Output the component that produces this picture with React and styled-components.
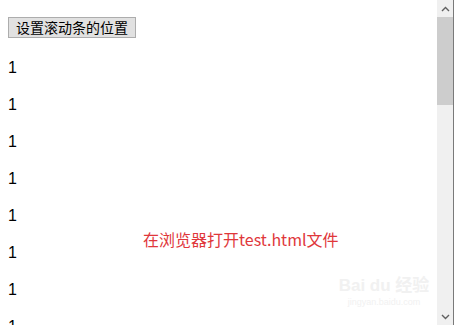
import React from "react";
import styled, { createGlobalStyle } from "styled-components";

const GlobalStyle = createGlobalStyle`
  html, body {
    margin: 0;
    padding: 0;
    background: #ffffff;
    overflow: hidden;
  }
`;

const Window = styled.div`
  position: relative;
  width: 456px;
  height: 325px;
  display: flex;
  overflow: hidden;
  background: #ffffff;
`;

const Content = styled.div`
  flex: 1;
  padding: 17px 0 0 8px;
  overflow: hidden;
  font-family: "Liberation Sans", Arial, sans-serif;
`;

const Button = styled.button`
  display: block;
  height: 21px;
  padding: 0 7px;
  background: #e1e1e1;
  border: 1px solid #adadad;
  border-radius: 0;
  font-family: "Noto Sans CJK SC", "Liberation Sans", sans-serif;
  font-size: 14px;
  line-height: 19px;
  color: #000000;
`;

const Line = styled.p`
  margin: 16px 0 0;
  font-size: 16px;
  line-height: 21px;
  color: #000000;
  &:first-of-type {
    margin-top: 19px;
  }
`;

const Scrollbar = styled.div`
  width: 16px;
  display: flex;
  flex-direction: column;
  background: #f0f0f0;
  margin-right: 2px;
  border-right: 1px solid #7a7a7a;
`;

const Arrow = styled.div`
  height: 17px;
  display: flex;
  align-items: center;
  justify-content: center;
  color: #606060;
`;

const Track = styled.div`
  flex: 1;
  display: flex;
  flex-direction: column;
`;

const Thumb = styled.div`
  height: 88px;
  background: #cdcdcd;
`;

const Note = styled.div`
  position: absolute;
  left: 143px;
  top: 227px;
  font-family: "Noto Sans CJK SC", "Liberation Sans", sans-serif;
  font-size: 16px;
  color: #e0373b;
  letter-spacing: 0;
`;

const Watermark = styled.div`
  position: absolute;
  left: 338px;
  top: 276px;
  width: 92px;
  display: flex;
  flex-direction: column;
  align-items: center;
  color: #f1f1f1;
  pointer-events: none;
`;

const MarkTitle = styled.div`
  font-size: 17px;
  font-weight: bold;
  line-height: 20px;
  white-space: nowrap;
  font-family: "Liberation Sans", "Noto Sans CJK SC", sans-serif;
`;

const MarkSub = styled.div`
  font-size: 9px;
  line-height: 12px;
  font-family: "Liberation Sans", sans-serif;
`;

const Chevron = ({ up }) => (
  <svg width="9" height="6" viewBox="0 0 9 6">
    <path
      d={up ? "M1 5 L4.5 1.5 L8 5" : "M1 1 L4.5 4.5 L8 1"}
      fill="none"
      stroke="currentColor"
      strokeWidth="1.4"
    />
  </svg>
);

const lines = Array.from({ length: 8 }, () => "1");

export default function App() {
  return (
    <>
      <GlobalStyle />
      <Window>
        <Content>
          <Button>设置滚动条的位置</Button>
          {lines.map((t, i) => (
            <Line key={i}>{t}</Line>
          ))}
        </Content>
        <Scrollbar>
          <Arrow>
            <Chevron up />
          </Arrow>
          <Track>
            <Thumb />
          </Track>
          <Arrow>
            <Chevron />
          </Arrow>
        </Scrollbar>
        <Note>在浏览器打开test.html文件</Note>
        <Watermark>
          <MarkTitle>Bai du 经验</MarkTitle>
          <MarkSub>jingyan.baidu.com</MarkSub>
        </Watermark>
      </Window>
    </>
  );
}
